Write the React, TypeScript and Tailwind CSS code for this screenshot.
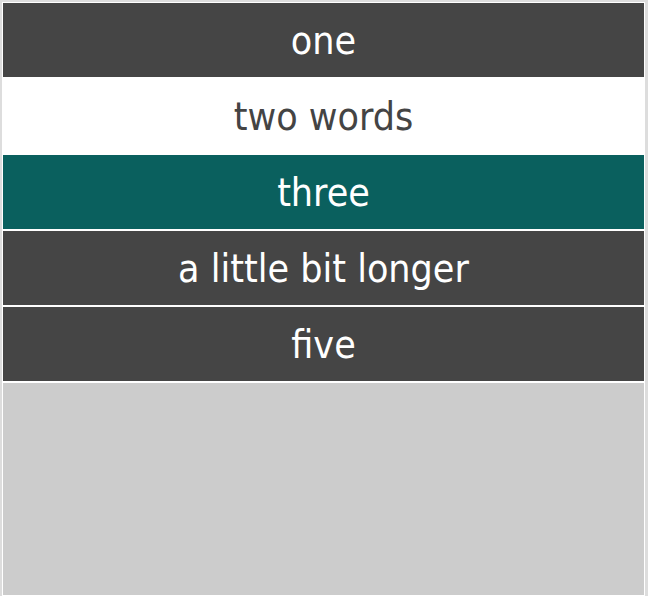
const items = [
  { label: "one", tone: "dark" },
  { label: "two words", tone: "light" },
  { label: "three", tone: "active" },
  { label: "a little bit longer", tone: "dark" },
  { label: "five", tone: "dark" },
];

export default function App() {
  return (
    <div className="flex min-h-screen flex-col border-t-2 border-l-2 border-r-[3px] border-[#dddddd] bg-white p-px font-['DejaVu_Sans_Condensed','DejaVu_Sans',sans-serif] font-stretch-condensed">
      <ul className="flex flex-col">
        {items.map((item) => (
          <li
            key={item.label}
            className={`mb-[2px] flex h-[74px] items-center justify-center text-[39px] leading-none ${
              item.tone === "active"
                ? "bg-[#0a605e] text-white"
                : item.tone === "light"
                ? "bg-white text-[#444444]"
                : "bg-[#454545] text-white"
            }`}
          >
            {item.label}
          </li>
        ))}
      </ul>
      <div className="flex-1 bg-[#cccccc]" />
    </div>
  );
}
